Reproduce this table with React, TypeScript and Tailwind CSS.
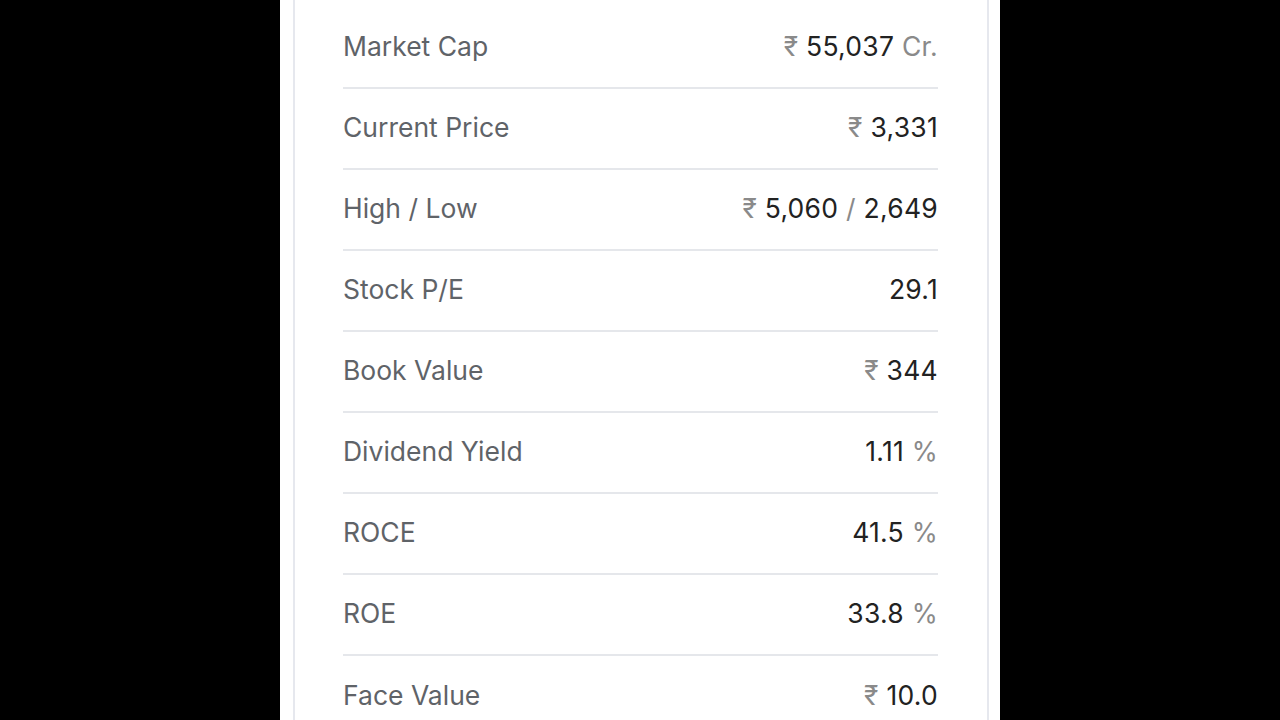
const ROWS: { label: string; value: React.ReactNode }[] = [
  {
    label: "Market Cap",
    value: (
      <>
        <span className="text-[#8a8a8a]">₹</span> 55,037{" "}
        <span className="text-[#8a8a8a]">Cr.</span>
      </>
    ),
  },
  {
    label: "Current Price",
    value: (
      <>
        <span className="text-[#8a8a8a]">₹</span> 3,331
      </>
    ),
  },
  {
    label: "High / Low",
    value: (
      <>
        <span className="text-[#8a8a8a]">₹</span> 5,060{" "}
        <span className="text-[#8a8a8a]">/</span> 2,649
      </>
    ),
  },
  { label: "Stock P/E", value: <>29.1</> },
  {
    label: "Book Value",
    value: (
      <>
        <span className="text-[#8a8a8a]">₹</span> 344
      </>
    ),
  },
  {
    label: "Dividend Yield",
    value: (
      <>
        1.11 <span className="text-[#8a8a8a]">%</span>
      </>
    ),
  },
  {
    label: "ROCE",
    value: (
      <>
        41.5 <span className="text-[#8a8a8a]">%</span>
      </>
    ),
  },
  {
    label: "ROE",
    value: (
      <>
        33.8 <span className="text-[#8a8a8a]">%</span>
      </>
    ),
  },
  {
    label: "Face Value",
    value: (
      <>
        <span className="text-[#8a8a8a]">₹</span> 10.0
      </>
    ),
  },
];

export default function App() {
  return (
    <div className="flex h-[720px] w-full justify-center overflow-hidden bg-black font-['Inter',sans-serif]">
      <div className="h-full w-[720px] bg-white pl-[13px] pr-[11px]">
        <div className="h-full border-x-2 border-[#e6e8ee] pl-[48px] pr-[49px] pt-[8px]">
          <ul>
            {ROWS.map((row, i) => (
              <li
                key={row.label}
                className={`flex h-[81px] items-center justify-between pb-[1px] text-[26.5px] ${
                  i < ROWS.length - 1 ? "border-b-2 border-[#e5e7eb]" : ""
                }`}
              >
                <span className="text-[#5f6368]">{row.label}</span>
                <span className="tracking-[0.01em] text-[#222]">{row.value}</span>
              </li>
            ))}
          </ul>
        </div>
      </div>
    </div>
  );
}
